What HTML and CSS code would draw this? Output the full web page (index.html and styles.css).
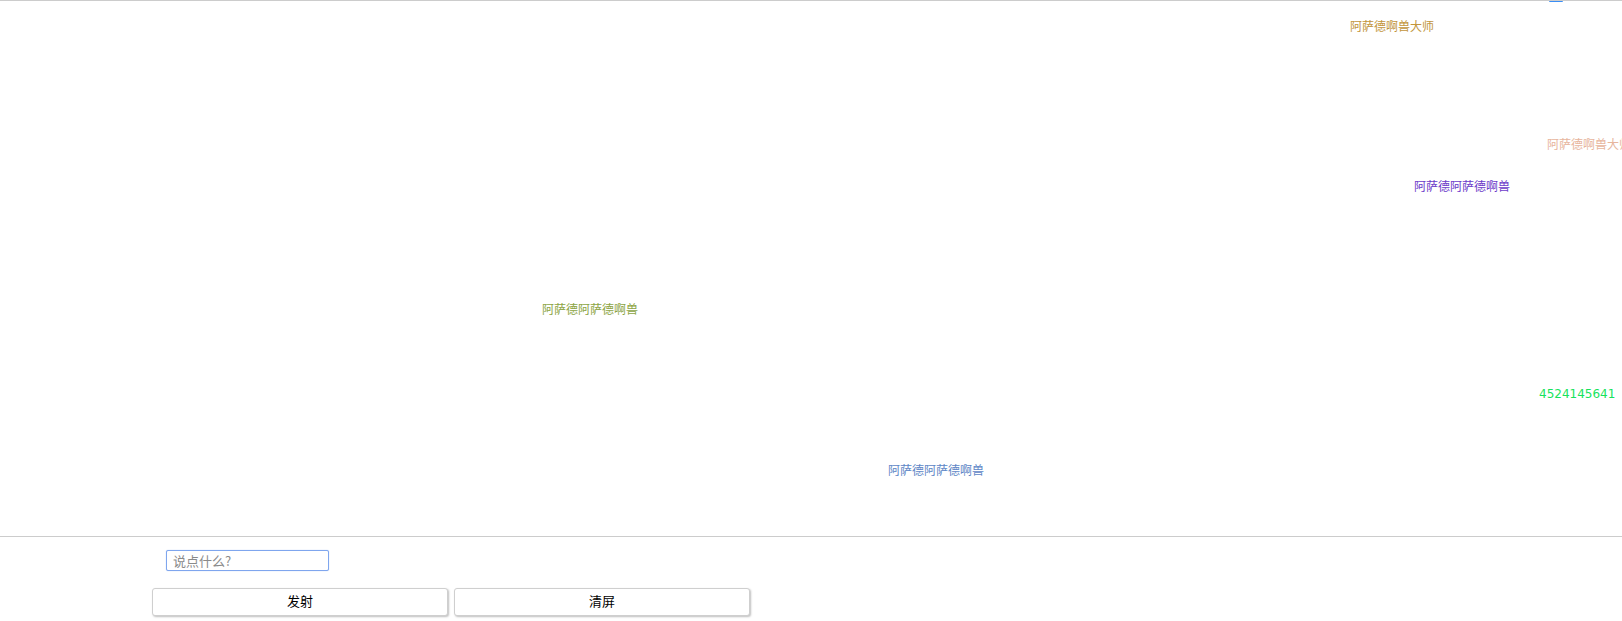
FILE: index.html
```html
<!DOCTYPE html>
<html lang="zh-CN">
<head>
    <meta charset="UTF-8">
    <meta name="viewport" content="width=device-width, initial-scale=1.0">
    <title>弹幕</title>
    <link rel="stylesheet" href="styles.css">
</head>
<body>
    <!-- 弹幕区域 -->
    <div class="screen">
        <span class="edge-mark"></span>
        <span class="danmu gold" style="left: 1350px; top: 16px;">阿萨德啊兽大师</span>
        <span class="danmu peach" style="left: 1547px; top: 134px;">阿萨德啊兽大师</span>
        <span class="danmu purple" style="left: 1414px; top: 176px;">阿萨德阿萨德啊兽</span>
        <span class="danmu olive" style="left: 542px; top: 299px;">阿萨德阿萨德啊兽</span>
        <span class="danmu green" style="left: 1539px; top: 384px;">4524145641</span>
        <span class="danmu blue" style="left: 888px; top: 460px;">阿萨德阿萨德啊兽</span>
    </div>

    <div class="controls">
        <div class="input-row">
            <input type="text" class="text-input" placeholder="说点什么?">
        </div>
        <div class="btn-row">
            <button class="btn">发射</button>
            <button class="btn">清屏</button>
        </div>
    </div>
</body>
</html>
```

FILE: styles.css
```css
* {
    margin: 0;
    padding: 0;
    box-sizing: border-box;
}

body {
    font-family: "Noto Sans CJK SC", "Liberation Sans", sans-serif;
    background-color: #ffffff;
    color: #000;
    width: 1622px;
    height: 621px;
    overflow: hidden;
}

.screen {
    position: relative;
    height: 537px;
    border-top: 1px solid #cccccc;
    border-bottom: 1px solid #cccccc;
    overflow: hidden;
}

.edge-mark {
    position: absolute;
    left: 1549px;
    top: -1px;
    width: 14px;
    height: 2px;
    background-color: #3b8ef5;
    border-radius: 1px;
}

.danmu {
    position: absolute;
    font-size: 12px;
    line-height: 18px;
    white-space: nowrap;
}

.gold {
    color: #c2953c;
}

.peach {
    color: #e7b59d;
}

.purple {
    color: #6c3bc9;
}

.olive {
    color: #8ca443;
}

.green {
    color: #17e35c;
    font-family: "DejaVu Sans", sans-serif;
}

.blue {
    color: #5e86c6;
}

.controls {
    padding-left: 152px;
}

.input-row {
    padding: 13px 0 0 14px;
}

.text-input {
    display: block;
    width: 163px;
    height: 21px;
    padding: 0 6px;
    border: 1px solid #7fa6ee;
    border-radius: 2px;
    box-shadow: 0 0 1px #9bbaf3;
    font-family: inherit;
    font-size: 13px;
    outline: none;
}

.text-input::placeholder {
    color: #8a8a8a;
}

.btn-row {
    display: flex;
    gap: 6px;
    margin-top: 17px;
}

.btn {
    width: 296px;
    height: 28px;
    padding-bottom: 3px;
    background-color: #ffffff;
    border: 1px solid #cfcfcf;
    border-radius: 3px;
    box-shadow: 1px 1px 2px rgba(0, 0, 0, 0.25);
    font-family: inherit;
    font-size: 13px;
    color: #000;
    cursor: pointer;
}
```
